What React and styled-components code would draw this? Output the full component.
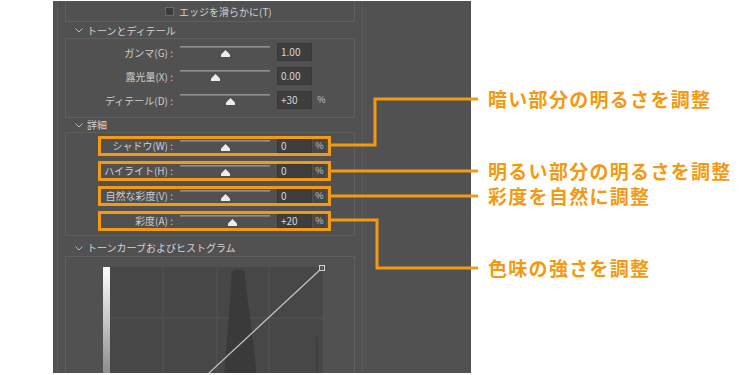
import React from "react";
import styled, { createGlobalStyle } from "styled-components";

const GlobalStyle = createGlobalStyle`
  html, body { margin: 0; padding: 0; background: #fff; }
  body { font-family: "Noto Sans CJK JP", "Noto Sans", sans-serif; }
`;

const ORANGE = "#f39a12";

const Page = styled.div`
  position: relative;
  width: 750px;
  height: 375px;
  background: #fff;
  overflow: hidden;
`;

const Panel = styled.div`
  margin-left: 53px;
  margin-top: 1px;
  width: 418px;
  height: 372px;
  box-sizing: border-box;
  padding-left: 4px;
  background: #515151;
  display: flex;
  overflow: hidden;
`;

const Column = styled.div`
  width: 306px;
  height: 100%;
  box-sizing: border-box;
  border-left: 1px solid #5b5b5b;
  border-right: 1px solid #5b5b5b;
  padding: 0 7px;
  display: flex;
  flex-direction: column;
`;

const Group = styled.div`
  box-sizing: border-box;
  border: 1px solid #5f5f5f;
  ${(p) => (p.$cutTop ? "border-top: none;" : "")}
  ${(p) => (p.$cutBottom ? "border-bottom: none; flex: 1;" : "")}
  padding: ${(p) => p.$pad || "0"};
  overflow: hidden;
`;

const Header = styled.div`
  display: flex;
  align-items: center;
  gap: 4px;
  padding: ${(p) => p.$pad || "3px 0 0 10px"};
  line-height: ${(p) => p.$lh || 13}px;
  font-size: 10px;
  color: #d2d2d2;
`;

const CheckRow = styled.div`
  height: 20px;
  display: flex;
  align-items: center;
  padding-left: 99px;
  gap: 5px;
  font-size: 10px;
  color: #d2d2d2;
`;

const Check = styled.span`
  width: 7px;
  height: 7px;
  background: #3b3b3b;
  border: 1px solid #6a6a6a;
`;

const Row = styled.div`
  height: ${(p) => p.$h}px;
  display: flex;
  align-items: center;
  padding-left: 32px;
`;

const Frame = styled.div`
  width: 233px;
  height: 20px;
  box-sizing: border-box;
  border: 3px solid ${(p) => (p.$hl ? ORANGE : "transparent")};
  display: flex;
  align-items: center;
`;

const Label = styled.span`
  width: 72px;
  flex: none;
  text-align: right;
  white-space: nowrap;
  font-size: 10px;
  color: #cdcdcd;
`;

const Slider = styled.div`
  position: relative;
  width: 90px;
  height: 14px;
  margin-left: 7px;
  flex: none;
`;

const Track = styled.div`
  position: absolute;
  left: 0;
  right: 0;
  top: 1px;
  height: 2px;
  background: linear-gradient(#9a9a9a, #6e6e6e);
`;

const Thumb = styled.svg`
  position: absolute;
  top: 5px;
`;

const Input = styled.div`
  width: 35px;
  height: ${(p) => (p.$hl ? 14 : 18)}px;
  margin-left: 7px;
  flex: none;
  box-sizing: border-box;
  background: #3e3e3e;
  border: 1px solid #383838;
  padding-left: 3px;
  font-size: 10px;
  line-height: ${(p) => (p.$hl ? 12 : 16)}px;
  color: #d6d6d6;
`;

const Percent = styled.span`
  width: 13px;
  height: 14px;
  flex: none;
  margin-left: ${(p) => (p.$boxed ? 1 : 3)}px;
  background: ${(p) => (p.$boxed ? "#474747" : "transparent")};
  text-align: center;
  font-size: 9px;
  line-height: 14px;
  color: #c6c6c6;
`;

const Chart = styled.div`
  display: flex;
  height: 100%;
`;

const Ramp = styled.div`
  width: 7px;
  height: 100%;
  background: linear-gradient(#ffffff, #8e8e8e);
`;

const Plot = styled.div`
  width: 213px;
  height: 100%;
  background: #474747;
  overflow: visible;
`;

const Overlay = styled.svg`
  position: absolute;
  left: 0;
  top: 0;
  pointer-events: none;
`;

const Callout = styled.div`
  position: absolute;
  left: 488px;
  top: ${(p) => p.$y - 12}px;
  line-height: 24px;
  font-size: 19px;
  font-weight: 700;
  letter-spacing: 1.3px;
  color: ${ORANGE};
  white-space: nowrap;
`;

const Chevron = () => (
  <svg width="8" height="5" viewBox="0 0 8 5">
    <path d="M0.5 0.5 L4 4 L7.5 0.5" fill="none" stroke="#bdbdbd" strokeWidth="1" />
  </svg>
);

const Control = ({ label, value, pos, pct, hl, h = 24 }) => (
  <Row $h={h}>
    <Frame $hl={hl}>
      <Label>{label}</Label>
      <Slider>
        <Track />
        <Thumb width="9" height="7" viewBox="0 0 9 7" style={{ left: pos - 4.5 }}>
          <path d="M4.5 0 L9 4.5 V7 H0 V4.5 Z" fill="#ececec" />
        </Thumb>
      </Slider>
      <Input $hl={hl}>{value}</Input>
      <Percent $boxed={hl}>{pct ? "%" : ""}</Percent>
    </Frame>
  </Row>
);

const details = [
  { label: "シャドウ(W) :", value: "0", pos: 45 },
  { label: "ハイライト(H) :", value: "0", pos: 45 },
  { label: "自然な彩度(V) :", value: "0", pos: 45 },
  { label: "彩度(A) :", value: "+20", pos: 52 },
];

const callouts = [
  { y: 99, text: "暗い部分の明るさを調整", pts: "331,145 375,145 375,99 478,99" },
  { y: 171, text: "明るい部分の明るさを調整", pts: "331,171 478,171" },
  { y: 196, text: "彩度を自然に調整", pts: "331,196 478,196" },
  { y: 268, text: "色味の強さを調整", pts: "331,220 377,220 377,268 478,268" },
];

export default function App() {
  return (
    <Page>
      <GlobalStyle />
      <Panel>
        <Column>
          <Group $cutTop style={{ height: 21 }}>
            <CheckRow>
              <Check />
              エッジを滑らかに(T)
            </CheckRow>
          </Group>

          <Header $pad="2px 0 1px 10px">
            <Chevron />
            トーンとディテール
          </Header>
          <Group $pad="1px 0 5px 0">
            <Control label="ガンマ(G) :" value="1.00" pos={45} />
            <Control label="露光量(X) :" value="0.00" pos={35} />
            <Control label="ディテール(D) :" value="+30" pos={50} pct />
          </Group>

          <Header $pad="1px 0 1px 10px" $lh={12}>
            <Chevron />
            詳細
          </Header>
          <Group $pad="0 0 2px 0">
            {details.map((d) => (
              <Control key={d.label} {...d} h={25} pct hl />
            ))}
          </Group>

          <Header $pad="5px 0 1px 10px" $lh={14}>
            <Chevron />
            トーンカーブおよびヒストグラム
          </Header>
          <Group $cutBottom $pad="10px 0 0 37px">
            <Chart>
              <Ramp />
              <Plot>
                <svg width="213" height="110" viewBox="0 0 213 110" style={{ overflow: "visible" }}>
                  <g stroke="#555" strokeWidth="1">
                    <line x1="53" y1="0" x2="53" y2="110" />
                    <line x1="107" y1="0" x2="107" y2="110" />
                    <line x1="159" y1="0" x2="159" y2="110" />
                    <line x1="0" y1="51" x2="213" y2="51" />
                  </g>
                  <path
                    d="M122 4 L127 2 L134 4 L137 28 L141 58 L147 110 L114 110 L118 60 L120 30 Z"
                    fill="#3a3a3a"
                  />
                  <line x1="207" y1="70" x2="207" y2="110" stroke="#3d3d3d" strokeWidth="1.5" />
                  <line x1="212" y1="1" x2="0" y2="198" stroke="#c4c4c4" strokeWidth="1.2" />
                  <rect x="209.5" y="-1.5" width="5" height="5" fill="#5a5a5a" stroke="#d0d0d0" strokeWidth="1" />
                </svg>
              </Plot>
            </Chart>
          </Group>
        </Column>
      </Panel>

      <Overlay width="750" height="375" viewBox="0 0 750 375">
        {callouts.map((c) => (
          <polyline key={c.text} points={c.pts} fill="none" stroke={ORANGE} strokeWidth="3" />
        ))}
      </Overlay>
      {callouts.map((c) => (
        <Callout key={c.text} $y={c.y}>
          {c.text}
        </Callout>
      ))}
    </Page>
  );
}
